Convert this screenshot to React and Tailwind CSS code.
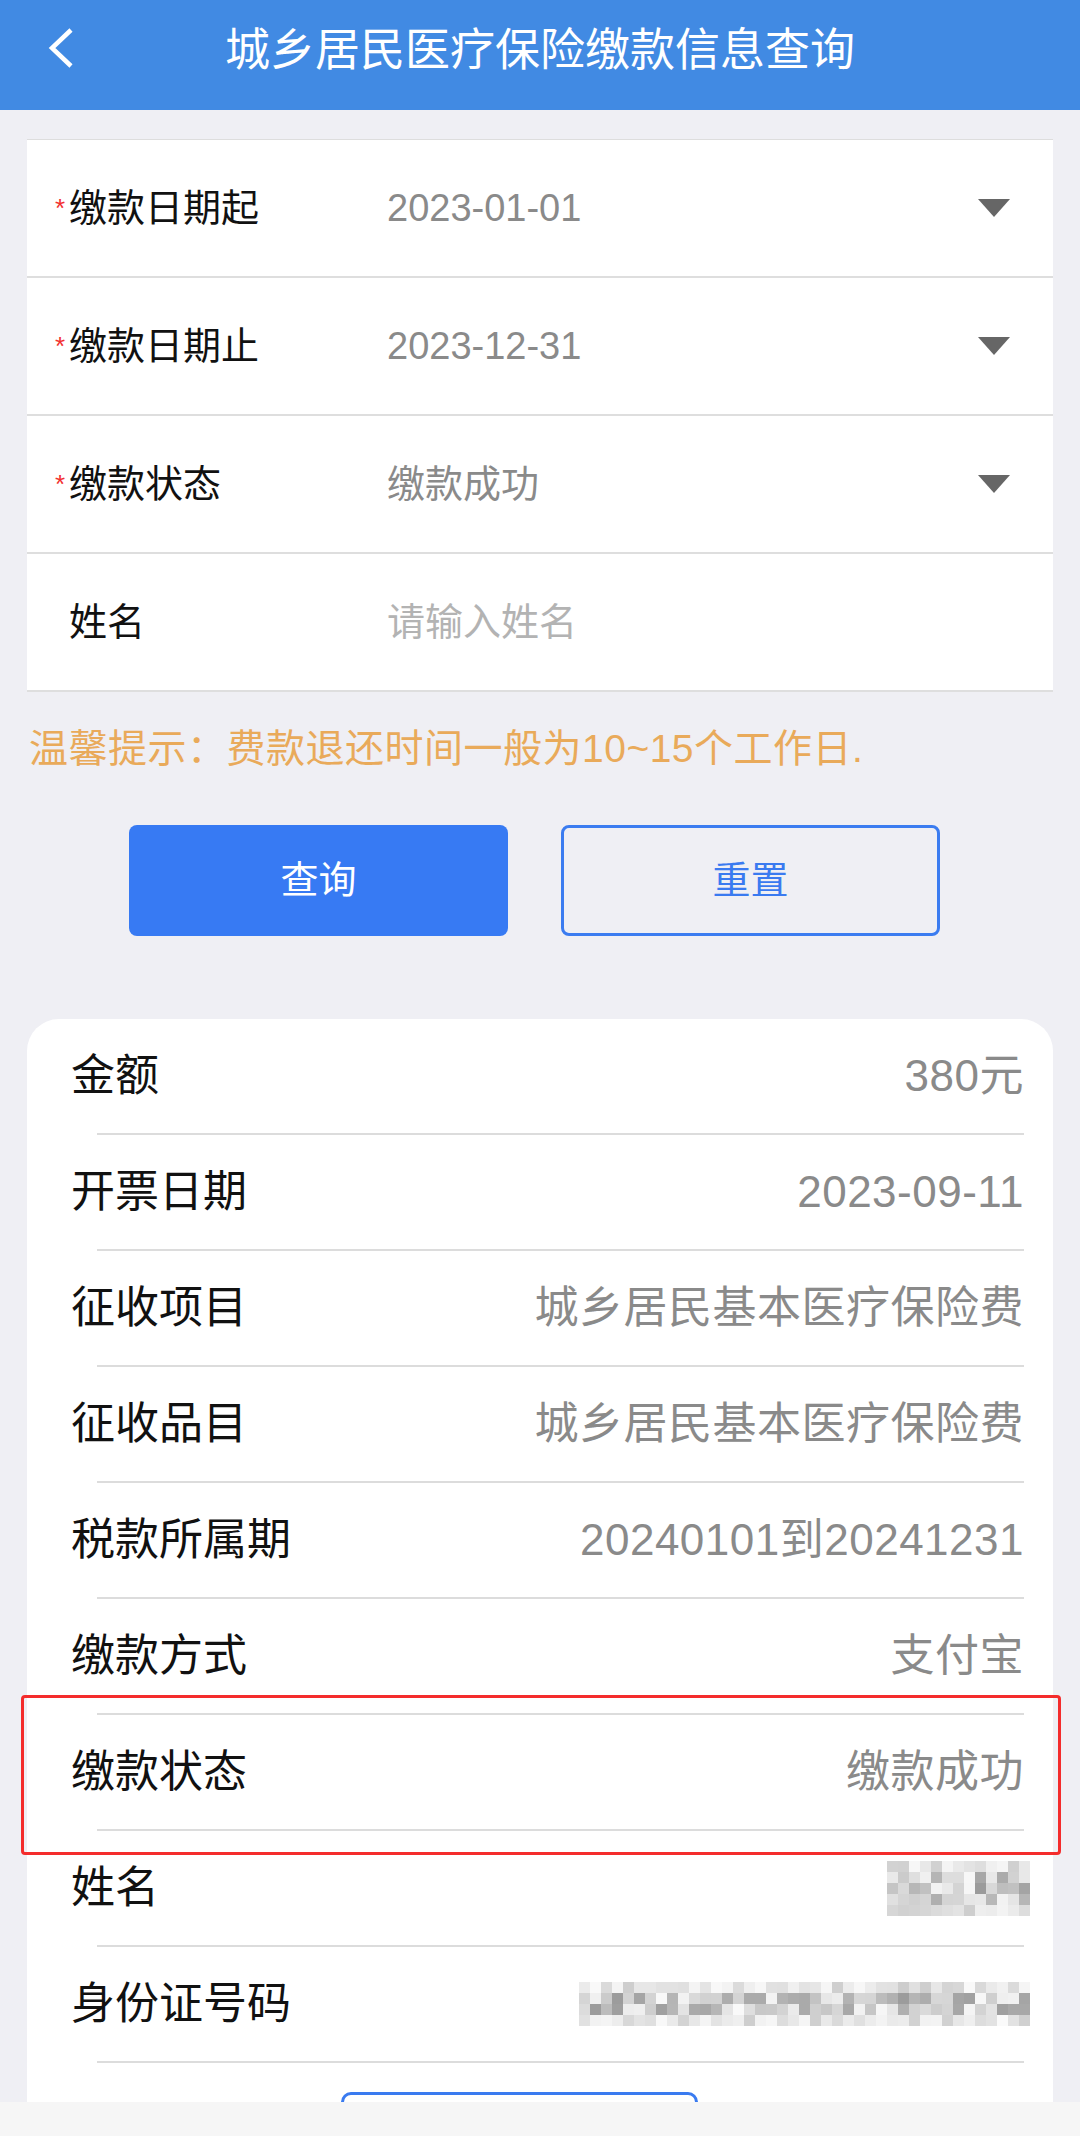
import React from "react";

const filters = [
  { label: "缴款日期起", value: "2023-01-01", required: true },
  { label: "缴款日期止", value: "2023-12-31", required: true },
  { label: "缴款状态", value: "缴款成功", required: true },
  { label: "姓名", placeholder: "请输入姓名" },
];

const details = [
  { label: "金额", value: "380元" },
  { label: "开票日期", value: "2023-09-11" },
  { label: "征收项目", value: "城乡居民基本医疗保险费" },
  { label: "征收品目", value: "城乡居民基本医疗保险费" },
  { label: "税款所属期", value: "20240101到20241231" },
  { label: "缴款方式", value: "支付宝" },
  { label: "缴款状态", value: "缴款成功" },
  { label: "姓名", mosaic: "name" },
  { label: "身份证号码", mosaic: "id" },
];

// pixelated block standing in for masked personal data
function Mosaic({ cols, rows, seed, className }) {
  let s = seed;
  const rand = () => {
    s = (s * 9301 + 49297) % 233280;
    return s / 233280;
  };
  const cells = [];
  for (let r = 0; r < rows; r++) {
    for (let c = 0; c < cols; c++) {
      const edge = r === 0 || r === rows - 1;
      const v = Math.round(250 - rand() * (edge ? 45 : 95));
      cells.push(<div key={r + "-" + c} style={{ background: `rgb(${v},${v},${v})` }} />);
    }
  }
  return <div className={"grid auto-rows-[11px] " + className}>{cells}</div>;
}

function BackIcon() {
  return (
    <svg width="26" height="42" viewBox="0 0 26 42" className="-mt-[5px]">
      <polyline points="23,3 4,21 23,39" fill="none" stroke="#fff" strokeWidth="4.5" />
    </svg>
  );
}

function Caret() {
  return (
    <svg width="32" height="18" viewBox="0 0 32 18">
      <polygon points="0,0 32,0 16,18" fill="#666" />
    </svg>
  );
}

export default function App() {
  return (
    <div className="h-[2136px] flex flex-col bg-[#efeff4] font-['Liberation_Sans','Noto_Sans_CJK_SC',sans-serif]">
      <div className="flex-1 overflow-hidden">
        {/* header */}
        <header className="h-[110px] bg-[#418ae3]">
          <div className="h-[100px] grid grid-cols-[1fr_auto_1fr] items-center">
            <div className="pl-[48px] flex items-center">
              <BackIcon />
            </div>
            <h1 className="text-white text-[45px] leading-none">城乡居民医疗保险缴款信息查询</h1>
            <div />
          </div>
        </header>

        <div className="px-[27px]">
          {/* filter form */}
          <div className="mt-[29px] bg-white border-t border-[#dddddd]">
            {filters.map((f) => (
              <div
                key={f.label}
                className="h-[138px] flex items-center border-b-2 border-[#dedede] pl-[28px] pr-[43px]"
              >
                <span className="w-[14px] text-[26px] leading-none text-[#f23030]">
                  {f.required ? "*" : ""}
                </span>
                <span className="w-[318px] text-[38px] leading-none text-[#111]">{f.label}</span>
                {f.value ? (
                  <span className="flex-1 text-[38px] leading-none text-[#8a8a8a]">{f.value}</span>
                ) : (
                  <span className="flex-1 text-[38px] leading-none text-[#b3b3b3]">{f.placeholder}</span>
                )}
                {f.required && <Caret />}
              </div>
            ))}
          </div>

          <p className="mt-[37px] pl-[2px] text-[39px] leading-none tracking-[0.5px] text-[#e9aa5a]">
            温馨提示：费款退还时间一般为10~15个工作日.
          </p>

          <div className="mt-[57px] pl-[102px] flex gap-[53px]">
            <button className="w-[379px] h-[111px] rounded-[8px] bg-[#377af3] text-white text-[38px]">
              查询
            </button>
            <button className="w-[379px] h-[111px] rounded-[8px] border-[3px] border-[#3b7cf0] text-[#3a7af0] text-[38px]">
              重置
            </button>
          </div>

          {/* result card */}
          <div className="relative mt-[83px] bg-white rounded-t-[32px]">
            {details.map((d) => (
              <div key={d.label}>
                <div className="h-[114px] flex items-center justify-between pl-[44px] pr-[29px]">
                  <span className="text-[44px] leading-none text-[#111]">{d.label}</span>
                  {d.mosaic === "name" ? (
                    <Mosaic cols={13} rows={5} seed={17} className="grid-cols-[repeat(13,11px)] -mr-[6px]" />
                  ) : d.mosaic === "id" ? (
                    <Mosaic cols={41} rows={4} seed={53} className="grid-cols-[repeat(41,11px)] -mr-[6px]" />
                  ) : (
                    <span className="text-[44px] leading-none tracking-[0.5px] text-[#8a8a8a]">{d.value}</span>
                  )}
                </div>
                <div className="ml-[70px] mr-[29px] h-[2px] bg-[#dcdcdc]" />
              </div>
            ))}
            <div className="mt-[29px] ml-[314px] w-[357px] h-[110px] rounded-[10px] border-[3px] border-[#3a7bf0]" />

            {/* highlight marker drawn over the status row */}
            <div className="absolute top-[676px] -left-[6px] w-[1040px] h-[160px] border-[3px] border-[#f42c2c] rounded-[4px]" />
          </div>
        </div>
      </div>
      <div className="h-[34px] bg-[#f6f6f6]" />
    </div>
  );
}
